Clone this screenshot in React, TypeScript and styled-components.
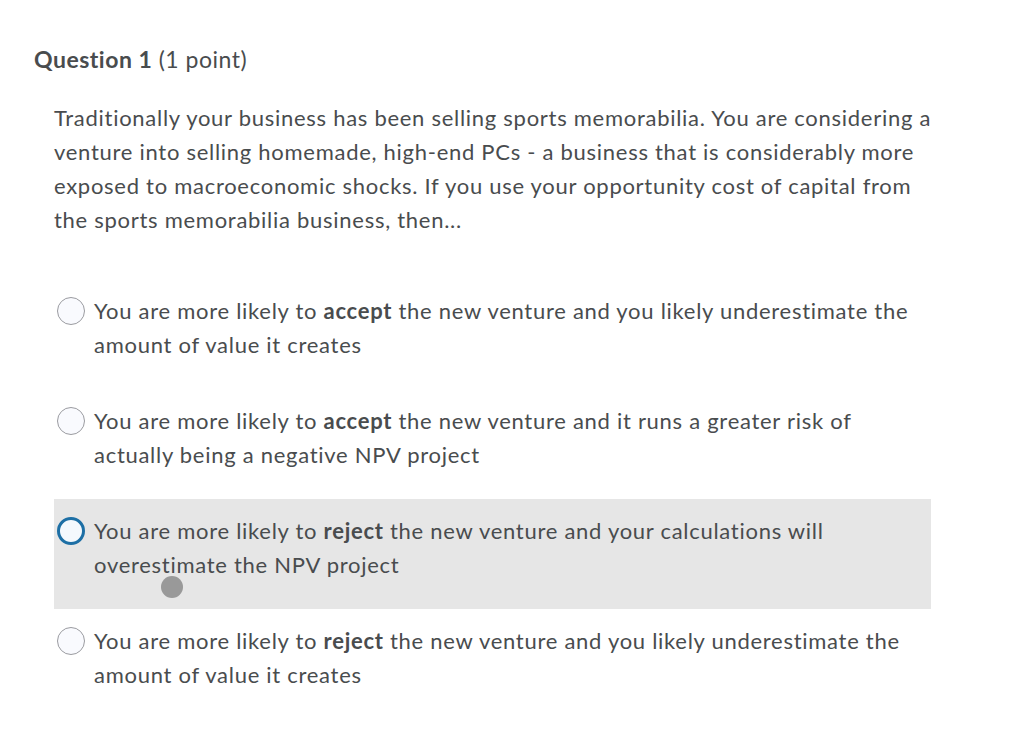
import React from 'react';
import styled, { createGlobalStyle } from 'styled-components';

const GlobalStyle = createGlobalStyle`
  html, body {
    margin: 0;
    padding: 0;
    background: #ffffff;
  }
  body {
    font-family: Lato, "Open Sans", sans-serif;
    color: #494c4e;
  }
`;

const Page = styled.div`
  width: 1024px;
  padding: 44px 0 0 34px;
  box-sizing: border-box;
`;

const Heading = styled.h2`
  margin: 0;
  font-size: 23px;
  line-height: 30px;
  font-weight: 400;
  letter-spacing: 0.5px;
  color: #494c4e;

  strong {
    font-weight: 700;
  }
`;

const Body = styled.div`
  padding-left: 20px;
  width: 877px;
`;

const Prompt = styled.p`
  margin: 27px 0 0;
  width: 890px;
  font-size: 22px;
  line-height: 34px;
  letter-spacing: 0.72px;
`;

const Options = styled.div`
  display: flex;
  flex-direction: column;
  margin-top: 42px;
`;

const Option = styled.label<{ $hover?: boolean }>`
  position: relative;
  display: flex;
  align-items: flex-start;
  gap: 9px;
  height: 110px;
  box-sizing: border-box;
  padding: 15px 0 0 3px;
  background: ${(p) => (p.$hover ? '#e6e6e6' : 'transparent')};
  cursor: pointer;
`;

const Radio = styled.span<{ $focus?: boolean }>`
  flex: none;
  width: 28px;
  height: 28px;
  margin-top: 3px;
  border-radius: 50%;
  box-sizing: border-box;
  background: ${(p) => (p.$focus ? '#f4f9fd' : '#f9fafe')};
  border: ${(p) => (p.$focus ? '3px solid #1d6fa5' : '1.5px solid #9a9ba0')};
`;

const OptionText = styled.span`
  font-size: 22px;
  line-height: 34px;
  letter-spacing: 0.72px;
  width: 826px;

  b {
    font-weight: 700;
  }
`;

const Cursor = styled.span`
  position: absolute;
  left: 107px;
  top: 77px;
  width: 22px;
  height: 22px;
  border-radius: 50%;
  background: #999999;
`;

const answers = [
  { verb: 'accept', rest: ' the new venture and you likely underestimate the amount of value it creates' },
  { verb: 'accept', rest: ' the new venture and it runs a greater risk of actually being a negative NPV project' },
  { verb: 'reject', rest: ' the new venture and your calculations will overestimate the NPV project' },
  { verb: 'reject', rest: ' the new venture and you likely underestimate the amount of value it creates' },
];

const App: React.FC = () => {
  return (
    <>
      <GlobalStyle />
      <Page>
        <Heading>
          <strong>Question 1</strong> (1 point)
        </Heading>
        <Body>
          <Prompt>
            Traditionally your business has been selling sports memorabilia. You are considering a
            venture into selling homemade, high-end PCs - a business that is considerably more
            exposed to macroeconomic shocks. If you use your opportunity cost of capital from
            the sports memorabilia business, then...
          </Prompt>
          <Options>
            {answers.map((a, i) => (
              <Option key={i} $hover={i === 2}>
                <Radio $focus={i === 2} />
                <OptionText>
                  You are more likely to <b>{a.verb}</b>
                  {a.rest}
                </OptionText>
                {i === 2 && <Cursor />}
              </Option>
            ))}
          </Options>
        </Body>
      </Page>
    </>
  );
};

export default App;
